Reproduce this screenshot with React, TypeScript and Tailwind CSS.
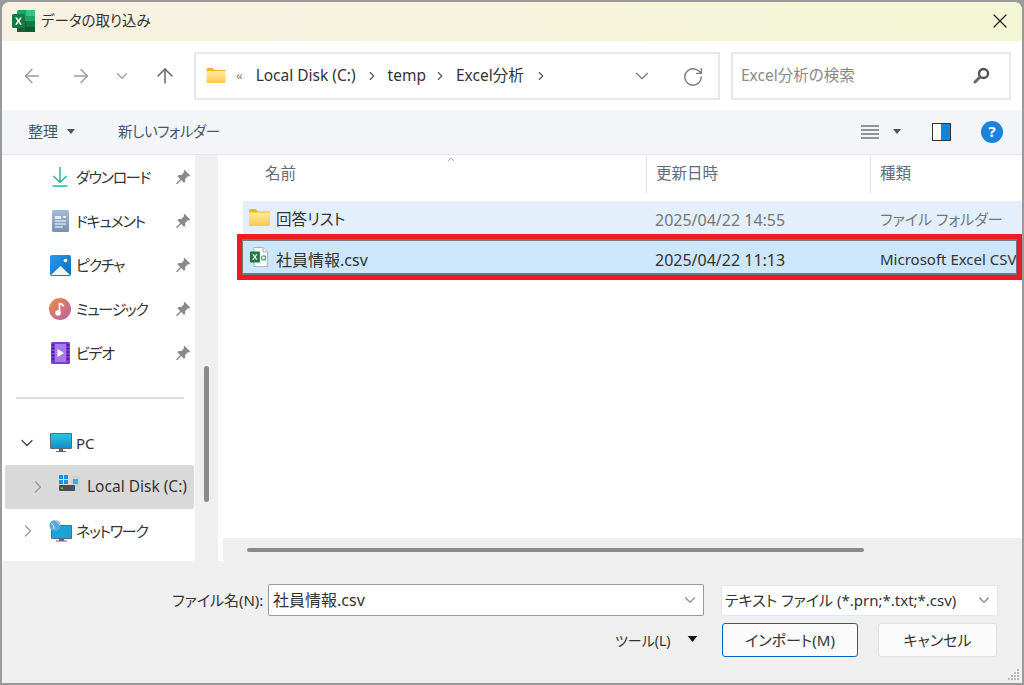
import { ArrowLeft, ArrowRight, ArrowUp, ChevronDown, ChevronRight, ChevronUp, RotateCw, X } from "lucide-react";

const font = { fontFamily: '"Noto Sans", "Noto Sans CJK JP", sans-serif' };

function FolderIcon({ className }: { className: string }) {
  return (
    <svg className={className} viewBox="0 0 20 16">
      <path d="M0 1.5C0 .7.6 0 1.4 0h5l2 2.2H20V5H0z" fill="#f0b429" />
      <defs>
        <linearGradient id="fold" x1="0" y1="0" x2="0" y2="1">
          <stop offset="0" stopColor="#ffe9a0" />
          <stop offset="1" stopColor="#fcc94f" />
        </linearGradient>
      </defs>
      <path d="M0 3.2h20V15a1 1 0 0 1-1 1H1a1 1 0 0 1-1-1z" fill="url(#fold)" />
    </svg>
  );
}

function ExcelLogo() {
  return (
    <svg className="w-[23px] h-[22px]" viewBox="0 0 23 22">
      <rect x="5" y="0" width="18" height="22" rx="1.5" fill="#21a366" />
      <rect x="14" y="0" width="9" height="6" fill="#33c481" />
      <rect x="14" y="11" width="9" height="5.5" fill="#107c41" />
      <rect x="5" y="11" width="9" height="11" fill="#185c37" />
      <rect x="14" y="16.5" width="9" height="5.5" fill="#0f5c33" />
      <rect x="0" y="4" width="13" height="14" rx="1.5" fill="#107c41" />
      <path d="M3.2 7.5h1.9l1.5 2.6L8 7.5h1.8l-2.3 3.6 2.4 3.7H8l-1.5-2.7-1.6 2.7H3.1l2.4-3.7z" fill="#fff" />
    </svg>
  );
}

function CsvIcon() {
  return (
    <svg className="w-[20px] h-[20px]" viewBox="0 0 20 22">
      <path d="M4.5.5h10l5 5v16h-15z" fill="#fff" stroke="#aaa" />
      <path d="M14.5.5v5h5" fill="#eee" stroke="#aaa" />
      <rect x="0" y="5" width="11" height="12" rx="1" fill="#1d7a45" />
      <path d="M2.6 8h1.7l1.2 2.2L6.7 8h1.6l-2 3 2 3H6.7l-1.2-2.2L4.3 14H2.6l2-3z" fill="#fff" />
      <circle cx="15" cy="12" r="2.2" fill="none" stroke="#3fa877" strokeWidth="1.2" />
      <path d="M17.2 9.5v5" stroke="#3fa877" strokeWidth="1.2" />
    </svg>
  );
}

function Pin() {
  return (
    <svg className="w-[16px] h-[16px] absolute left-[173px] top-[14px]" viewBox="0 0 16 16">
      <path d="M9.5.8l5.7 5.7-1.3 1.1-1-.3-2.700 2.700.1 2.600-1.300 1.300-2.800-2.900-4.200 4.200-1-.9 4.200-4.300-2.800-2.800 1.300-1.300 2.600.1 2.700-2.700-.3-1z" fill="#8a8a8a" />
    </svg>
  );
}

function NavItem({ icon, label }: { icon: React.ReactNode; label: string }) {
  return (
    <div className="h-[44px] flex items-center pl-[47px] relative">
      <div className="w-[22px] h-[22px] flex items-center justify-center shrink-0">{icon}</div>
      <span className="ml-[5px] text-[15px] tracking-[-1.3px] text-[#333] whitespace-nowrap">{label}</span>
      <Pin />
    </div>
  );
}

function Caret({ color = "#44546a", className = "w-[8px] h-[5px] block" }: { color?: string; className?: string }) {
  return (
    <svg className={className} viewBox="0 0 8 5">
      <path d="M0 0h8L4 5z" fill={color} />
    </svg>
  );
}

function Sidebar() {
  return (
    <div className="w-[193px] bg-white flex flex-col shrink-0">
      <NavItem
        label="ダウンロード"
        icon={
          <svg className="w-[16px] h-[20px]" viewBox="0 0 16 20">
            <path d="M8 0v15M1.5 9L8 15.5 14.5 9" fill="none" stroke="#25b48f" strokeWidth="1.5" />
            <path d="M.5 19h15" stroke="#25b48f" strokeWidth="1.5" />
          </svg>
        }
      />
      <NavItem
        label="ドキュメント"
        icon={
          <svg className="w-[17px] h-[22px]" viewBox="0 0 17 22">
            <defs>
              <linearGradient id="doc" x1="0" y1="0" x2="0" y2="1">
                <stop offset="0" stopColor="#a5bcd6" />
                <stop offset="1" stopColor="#7590b0" />
              </linearGradient>
            </defs>
            <rect width="17" height="22" rx="1.5" fill="url(#doc)" />
            <path d="M3 6h6v3H3zM11 6h3v2h-3z" fill="#e8eef5" />
            <path d="M3 11h11M3 14h11M3 17h8" stroke="#fff" strokeWidth="1" />
          </svg>
        }
      />
      <NavItem
        label="ピクチャ"
        icon={
          <svg className="w-[21px] h-[21px]" viewBox="0 0 21 21">
            <defs>
              <linearGradient id="pic" x1="0" y1="0" x2="1" y2="1">
                <stop offset="0" stopColor="#2a9be8" />
                <stop offset="1" stopColor="#0b6cc4" />
              </linearGradient>
            </defs>
            <rect width="21" height="21" rx="2" fill="url(#pic)" />
            <path d="M1 20L10.5 11 20 20z" fill="#f2f7fc" />
            <circle cx="15.5" cy="5.5" r="1.8" fill="#fff" />
          </svg>
        }
      />
      <NavItem
        label="ミュージック"
        icon={
          <svg className="w-[22px] h-[22px]" viewBox="0 0 22 22">
            <defs>
              <linearGradient id="mus" x1="0" y1="0" x2="1" y2="1">
                <stop offset="0" stopColor="#f08b3f" />
                <stop offset="1" stopColor="#b660ac" />
              </linearGradient>
            </defs>
            <circle cx="11" cy="11" r="11" fill="url(#mus)" />
            <circle cx="9" cy="15" r="2.8" fill="#fff" />
            <path d="M10.5 15V5.5c2 .2 3.5 1.2 4.2 3" fill="none" stroke="#fff" strokeWidth="1.6" />
          </svg>
        }
      />
      <NavItem
        label="ビデオ"
        icon={
          <svg className="w-[19px] h-[22px]" viewBox="0 0 19 22">
            <rect width="19" height="22" rx="1.5" fill="#7c3ad6" />
            <rect x="4" y="2" width="11" height="18" fill="#a77ae8" />
            <path d="M6.5 7l6.5 4-6.5 4z" fill="#fff" />
            <path d="M1 3h2M1 6.5h2M1 10h2M1 13.5h2M1 17h2M16 3h2M16 6.5h2M16 10h2M16 13.5h2M16 17h2" stroke="#2a1260" strokeWidth="1.2" />
          </svg>
        }
      />
      <div className="h-[46px] flex items-center pl-[14px] pr-[11px]">
        <div className="h-[2px] w-full bg-[#dedede]" />
      </div>
      <div className="h-[44px] flex items-center pl-[15px]">
        <ChevronDown className="w-[20px] h-[20px] text-[#444]" strokeWidth={1.5} />
        <svg className="ml-[13px] w-[22px] h-[20px]" viewBox="0 0 22 20">
          <defs>
            <linearGradient id="mon" x1="0" y1="0" x2="0" y2="1">
              <stop offset="0" stopColor="#2cc5e6" />
              <stop offset="1" stopColor="#0e8fc9" />
            </linearGradient>
          </defs>
          <rect width="22" height="16" rx="1" fill="#5b6b75" />
          <rect x="1" y="1" width="20" height="14" fill="url(#mon)" />
          <path d="M9 16h4v2h3v1H6v-1h3z" fill="#667" />
        </svg>
        <span className="ml-[4px] text-[15px] text-[#333]">PC</span>
      </div>
      <div className="h-[44px] flex items-center bg-[#d9d9d9] rounded-[2px] ml-[3px] mr-[1px] pl-[23px]">
        <ChevronRight className="w-[20px] h-[20px] text-[#999]" strokeWidth={1.5} />
        <svg className="ml-[11px] w-[22px] h-[18px] -mt-[6px]" viewBox="0 0 22 18">
          <path d="M0 0h4v4H0zM5 0h4v4H5zM0 5h4v4H0zM5 5h4v4H5z" fill="#1c8fe0" />
          <path d="M12 4a4.5 3.5 0 0 1 9 0v12h-9z" fill="#c7d3dc" />
          <path d="M14 4h5v5h-5z" fill="#4aa5dc" />
          <rect y="10" width="16" height="6" rx="1" fill="#4a4f55" />
          <rect x="2" y="12.5" width="2" height="1.5" fill="#5fd35f" />
        </svg>
        <span className="ml-[6px] text-[15.5px] text-[#333] whitespace-nowrap">Local Disk (C:)</span>
      </div>
      <div className="h-[44px] flex items-center pl-[16px]">
        <ChevronRight className="w-[20px] h-[20px] text-[#999]" strokeWidth={1.5} />
        <svg className="ml-[11px] w-[23px] h-[22px]" viewBox="0 0 23 22">
          <rect x="2" y="5" width="21" height="14" rx="1" fill="#5b6b75" />
          <rect x="3" y="6" width="19" height="12" fill="#17a4d6" />
          <path d="M10 19h5v1.5h3v1H7v-1h3z" fill="#667" />
          <circle cx="6" cy="5.5" r="5.5" fill="#5ba8e0" />
          <path d="M2 3c2 1 3 3 3 6M6 0c2 2 4 3 5 5" stroke="#d8ecf8" fill="none" />
        </svg>
        <span className="ml-[4px] text-[15px] tracking-[-1.3px] text-[#333]">ネットワーク</span>
      </div>
    </div>
  );
}

function FileList() {
  return (
    <div className="flex-1 min-w-0 bg-white flex flex-col overflow-hidden">
      <div className="h-[38px] flex text-[15.5px] text-[#5f6c7b] relative shrink-0">
        <div className="w-[428px] pl-[47px] flex items-center">名前</div>
        <ChevronUp className="absolute left-[225px] -top-[1px] w-[16px] h-[11px] text-[#777]" strokeWidth={1.5} />
        <div className="w-[224px] pl-[9px] flex items-center border-l border-[#e5e5e5]">更新日時</div>
        <div className="flex-1 pl-[9px] flex items-center border-l border-[#e5e5e5]">種類</div>
      </div>
      <div className="flex-1 pt-[8px] pl-[19px] text-[16px]">
        <div className="h-[33px] ml-[6px] flex items-center bg-[#e3f0fb]">
          <div className="w-[412px] flex items-center pl-[6px] text-[#333] shrink-0">
            <FolderIcon className="w-[21px] h-[17px] -mt-[1px]" />
            <span className="ml-[6px] pt-[4px] text-[15.5px]">回答リスト</span>
          </div>
          <div className="w-[225px] pt-[4px] text-[#777] shrink-0">2025/04/22 14:55</div>
          <div className="pt-[4px] text-[15px] text-[#777] whitespace-nowrap">ファイル フォルダー</div>
        </div>
        <div className="h-[46px] border-[5px] border-[#ed1c24] text-[#333]">
          <div className="h-full flex items-center bg-[#cce6fb] border-y-2 border-[#777] border-l border-r overflow-hidden">
            <div className="w-[412px] flex items-center pl-[6px] shrink-0">
              <CsvIcon />
              <span className="ml-[7px] pt-[5px]">社員情報.csv</span>
            </div>
            <div className="w-[225px] pt-[5px] shrink-0">2025/04/22 11:13</div>
            <div className="pt-[5px] text-[15px] whitespace-nowrap">Microsoft Excel CSV</div>
          </div>
        </div>
      </div>
      <div className="h-[23px] ml-[5px] bg-[#efefef] flex items-center pl-[24px] shrink-0">
        <div className="h-[4px] w-[617px] bg-[#8a8a8a] rounded-full" />
      </div>
    </div>
  );
}

export default function App() {
  return (
    <div style={font} className="w-[1024px] h-[685px] bg-[#9a9a9a] p-[2px] overflow-hidden [font-feature-settings:'palt']">
      <div className="w-full h-full rounded-t-[8px] overflow-hidden flex flex-col bg-white">
        <div className="h-[39px] shrink-0 flex items-center pl-[10px] pr-[10px] pb-[1px] bg-gradient-to-r from-[#f8f1e3] to-[#f3f6d4]">
          <ExcelLogo />
          <span className="ml-[6px] text-[14.5px] text-[#333]">データの取り込み</span>
          <X className="ml-auto w-[24px] h-[24px] text-[#222]" strokeWidth={1.3} />
        </div>
        <div className="h-[69px] shrink-0 flex items-center bg-white">
          <div className="w-[192px] flex items-center pl-[19px] text-[#9a9a9a] shrink-0">
            <ArrowLeft className="w-[22px] h-[22px]" strokeWidth={1.5} />
            <ArrowRight className="ml-[27px] w-[22px] h-[22px]" strokeWidth={1.5} />
            <ChevronDown className="ml-[21px] w-[18px] h-[18px]" strokeWidth={1.5} />
            <ArrowUp className="ml-[22px] w-[24px] h-[24px] text-[#666]" strokeWidth={1.5} />
          </div>
          <div className="w-[526px] h-[48px] border-2 border-[#e8e8e8] flex items-center pl-[10px] text-[15.5px] text-[#333] shrink-0 relative">
            <FolderIcon className="w-[20px] h-[15px]" />
            <span className="ml-[10px] text-[13px] text-[#888]">«</span>
            <span className="ml-[13px] whitespace-nowrap">Local Disk (C:)</span>
            <ChevronRight className="ml-[9px] w-[14px] h-[14px] text-[#555]" strokeWidth={2} />
            <span className="ml-[9px]">temp</span>
            <ChevronRight className="ml-[7px] w-[14px] h-[14px] text-[#555]" strokeWidth={2} />
            <span className="ml-[9px]">Excel分析</span>
            <ChevronRight className="ml-[10px] w-[14px] h-[14px] text-[#555]" strokeWidth={2} />
            <ChevronDown className="absolute left-[434px] top-[11px] w-[24px] h-[22px] text-[#777]" strokeWidth={1.2} />
            <RotateCw className="absolute left-[486px] top-[12px] w-[22px] h-[22px] text-[#777]" strokeWidth={1.5} />
          </div>
          <div className="ml-[11px] w-[280px] h-[48px] border-2 border-[#e8e8e8] flex items-center pl-[8px] pr-[19px] text-[15.5px] text-[#8a8a8a] shrink-0">
            <span>Excel分析の検索</span>
            <svg className="ml-auto w-[17px] h-[17px]" viewBox="0 0 17 17">
              <circle cx="10.5" cy="6.5" r="4.5" fill="none" stroke="#555" strokeWidth="2.4" />
              <path d="M7 10l-5 5" stroke="#666" strokeWidth="3" strokeLinecap="round" />
            </svg>
          </div>
        </div>
        <div className="h-[45px] shrink-0 flex items-center bg-[#f3f5f8] border-b border-[#e6e6e6] text-[15px] text-[#44546a] pl-[26px] pr-[19px] pb-[1px]">
          <span>整理</span>
          <span className="ml-[9px]"><Caret /></span>
          <span className="ml-[43px] text-[14.5px] tracking-[-0.4px]">新しいフォルダー</span>
          <svg className="ml-auto w-[18px] h-[14px]" viewBox="0 0 18 14">
            <path d="M0 1h18M0 5h18M0 9h18M0 13h18" stroke="#333" strokeWidth="1" />
          </svg>
          <span className="ml-[14px]"><Caret /></span>
          <svg className="ml-[31px] w-[19px] h-[18px]" viewBox="0 0 19 18">
            <rect x=".5" y=".5" width="18" height="17" fill="#fff" stroke="#333" />
            <rect x="9" y="1" width="9" height="16" fill="#1483d8" />
          </svg>
          <div className="ml-[30px] w-[22px] h-[22px] rounded-full bg-[#1a84dc] flex items-center justify-center text-white text-[15px] font-bold">?</div>
        </div>
        <div className="flex-1 min-h-0 flex bg-[#efefef]">
          <Sidebar />
          <div className="w-[23px] shrink-0 flex justify-center pt-[211px]">
            <div className="w-[5px] h-[136px] bg-[#8a8a8a] rounded-full" />
          </div>
          <FileList />
        </div>
        <div className="h-[122px] shrink-0 bg-[#efefef] relative text-[15px] text-[#333]">
          <div className="flex items-center pt-[23px] pl-[170px]">
            <span className="w-[96px] whitespace-nowrap">ファイル名(N):</span>
            <div className="w-[436px] h-[32px] bg-white border border-[#9a9a9a] rounded-[2px] flex items-center pl-[4px] pr-[4px] text-[16px]">
              <span>社員情報.csv</span>
              <ChevronDown className="ml-auto w-[18px] h-[18px] text-[#888]" strokeWidth={1.5} />
            </div>
            <div className="ml-[17px] w-[277px] h-[31px] bg-white border border-[#e5e5e5] rounded-[2px] flex items-center pl-[3px] pr-[4px] whitespace-nowrap">
              <span>テキスト ファイル (*.prn;*.txt;*.csv)</span>
              <ChevronDown className="ml-auto w-[18px] h-[18px] text-[#888]" strokeWidth={1.5} />
            </div>
          </div>
          <div className="flex items-center mt-[7px] pl-[613px]">
            <span className="w-[72px] text-[14px] whitespace-nowrap">ツール(L)</span>
            <Caret color="#111" className="w-[11px] h-[6px] block -mt-[2px]" />
            <button className="ml-[24px] w-[136px] h-[34px] bg-[#fbfbfb] border border-[#0067c0] rounded-[3px]">インポート(M)</button>
            <button className="ml-[20px] w-[119px] h-[34px] bg-[#fbfbfb] border border-[#e0e0e0] rounded-[3px]">キャンセル</button>
          </div>
          <svg className="absolute right-[2px] bottom-[2px] w-[12px] h-[12px]" viewBox="0 0 12 12">
            <path d="M9 0h2v2H9zM6 3h2v2H6zM9 3h2v2H9zM3 6h2v2H3zM6 6h2v2H6zM9 6h2v2H9zM0 9h2v2H0zM3 9h2v2H3zM6 9h2v2H6zM9 9h2v2H9z" fill="#bbb" />
          </svg>
        </div>
      </div>
    </div>
  );
}
